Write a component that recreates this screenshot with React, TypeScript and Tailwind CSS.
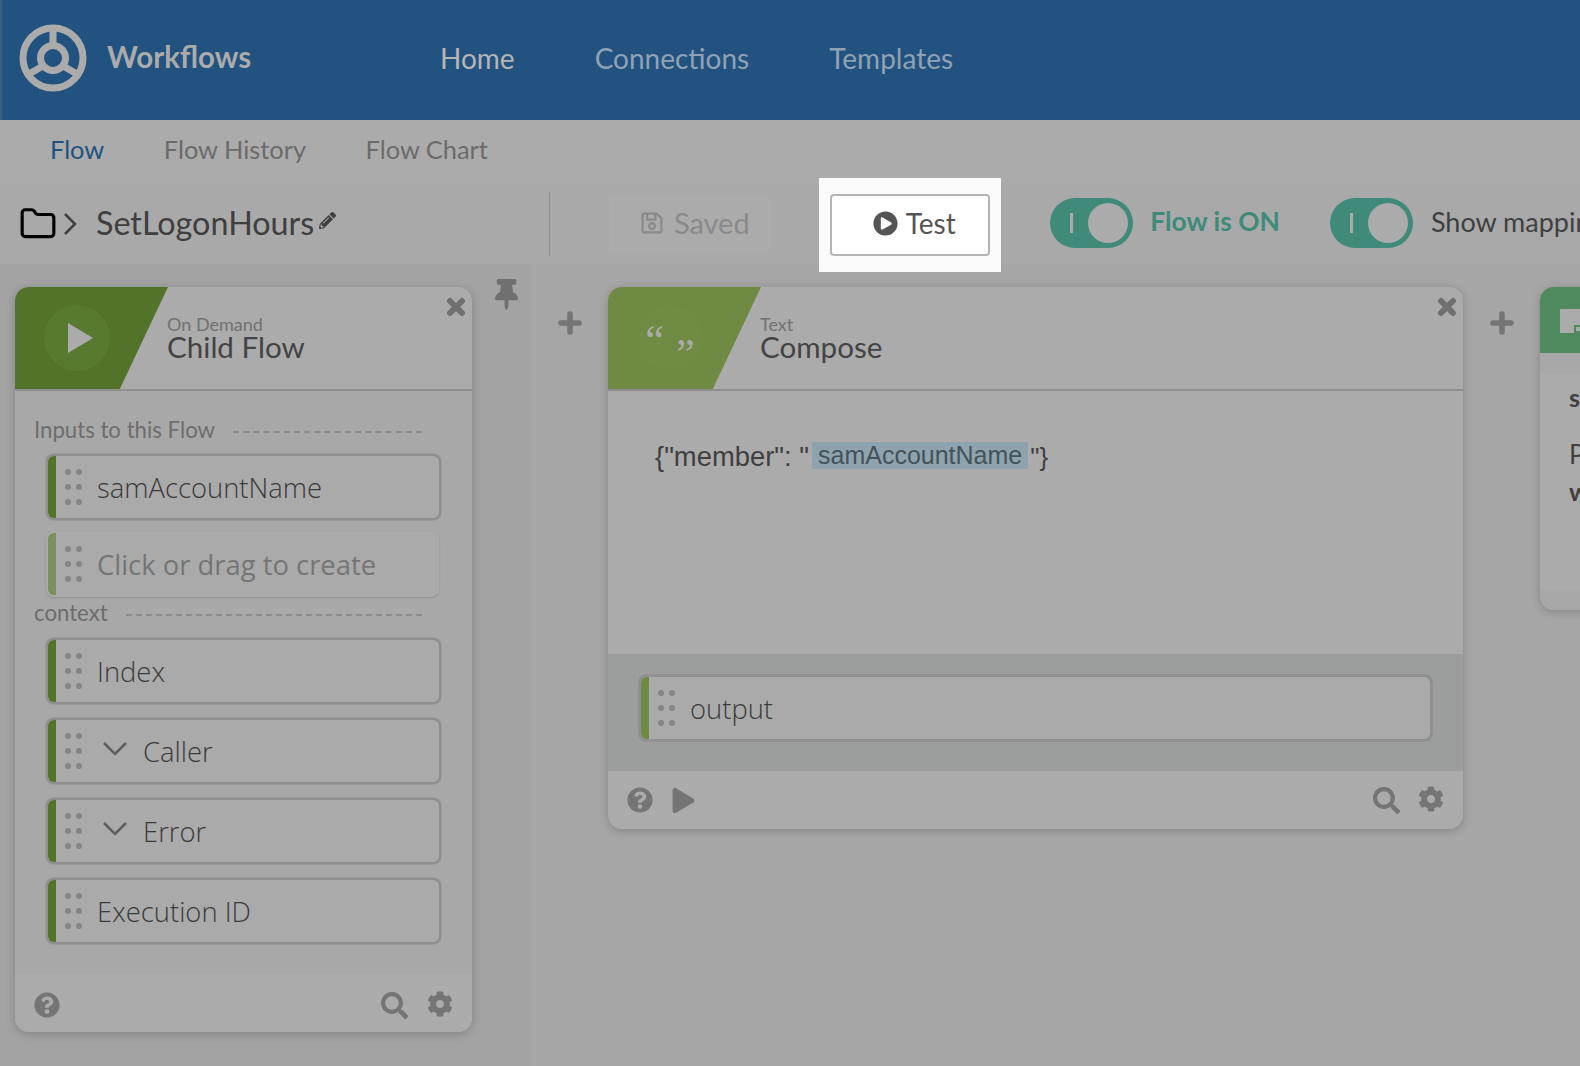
import { Folder } from 'lucide-react';
import {
    FaCog,
    FaPencilAlt,
    FaPlay,
    FaPlayCircle,
    FaQuestionCircle,
    FaRegSave,
    FaSearch,
    FaThumbtack,
} from 'react-icons/fa';

const heading = "font-['Lato','Open_Sans',sans-serif]";

function Logo() {
    return (
        <svg width="68" height="68" viewBox="0 0 68 68" fill="none" stroke="#ababab" className="mt-[-5px] shrink-0">
            <circle cx="34" cy="34" r="30" strokeWidth="7" />
            <circle cx="34" cy="34" r="12.5" strokeWidth="7" />
            <path d="M34 6v16M10 50l14-8M58 50l-14-8" strokeWidth="7" />
        </svg>
    );
}

function Toggle() {
    return (
        <div className="flex h-[50px] w-[83px] shrink-0 items-center justify-between rounded-full bg-[#3f8a78] pl-[20px] pr-[5px]">
            <div className="h-[20px] w-[3px] bg-[#ababab]" />
            <div className="h-[40px] w-[40px] rounded-full bg-[#ababab]" />
        </div>
    );
}

function Dots() {
    return (
        <div className="grid w-[17px] shrink-0 grid-cols-2 gap-x-[5px] gap-y-[9px]">
            {[0, 1, 2, 3, 4, 5].map((d) => (
                <div key={d} className="h-[6px] w-[6px] rounded-full bg-[#858585]" />
            ))}
        </div>
    );
}

function CloseIcon() {
    return (
        <svg width="20" height="20" viewBox="0 0 20 20" className="absolute right-[6px] top-[10px]">
            <path d="M4 4l12 12M16 4L4 16" stroke="#707070" strokeWidth="6" strokeLinecap="round" />
        </svg>
    );
}

function PlusIcon() {
    return (
        <svg width="24" height="24" viewBox="0 0 24 24">
            <path d="M12 3v18M3 12h18" stroke="#757575" strokeWidth="5.5" strokeLinecap="round" />
        </svg>
    );
}

function Row({
    label,
    bar = 'bg-[#53732b]',
    chevron = false,
    ghost = false,
}: {
    label: string;
    bar?: string;
    chevron?: boolean;
    ghost?: boolean;
}) {
    return (
        <div
            className={
                ghost
                    ? 'mr-[2px] flex h-[66px] items-stretch overflow-hidden rounded-[8px] border-2 border-transparent bg-[#aaaaaa] shadow-[0_1px_2px_rgba(0,0,0,0.15)]'
                    : 'flex h-[66px] items-stretch overflow-hidden rounded-[8px] border-2 border-[#8f8f8f] bg-[#aaaaaa] shadow-[0_0_2px_rgba(0,0,0,0.25)]'
            }
        >
            <div className={`w-[8px] shrink-0 ${bar}`} />
            <div className="flex flex-1 items-center pl-[9px]">
                <Dots />
                {chevron && (
                    <svg width="26" height="16" viewBox="0 0 26 16" fill="none" className="mb-[4px] ml-[20px]">
                        <path d="M2 2l11 11L24 2" stroke="#5f5f5f" strokeWidth="2.5" />
                    </svg>
                )}
                <span
                    className={`pt-[2px] font-['Open_Sans',sans-serif] text-[27.4px] leading-none ${
                        chevron ? 'ml-[15px]' : 'ml-[15px]'
                    } ${ghost ? 'font-normal text-[#757575]' : 'font-light text-[#3a3a3a]'}`}
                >
                    {label}
                </span>
            </div>
        </div>
    );
}

function CardHead({ small, title, green, icon }: { small: string; title: string; green: string; icon: React.ReactNode }) {
    return (
        <div className="relative flex h-[104px] shrink-0 border-b-2 border-[#8e8e8e]">
            <div className={`flex h-[102px] w-[153px] shrink-0 items-center pl-[29px] ${green} [clip-path:polygon(0_0,100%_0,68.5%_100%,0_100%)]`}>
                {icon}
            </div>
            <div className={`${heading} -ml-[1px] pt-[29px] text-[#444444]`}>
                <div className="whitespace-nowrap text-[18px] leading-[16px] text-[#727272]">{small}</div>
                <div className="whitespace-nowrap text-[29.6px] leading-[30px]">{title}</div>
            </div>
            <CloseIcon />
        </div>
    );
}

function Section({ label }: { label: string }) {
    return (
        <div className={`${heading} flex items-center gap-[18px] pr-[50px] text-[22.2px] leading-[26px] text-[#6d6d6d]`}>
            <span>{label}</span>
            <div className="mt-[3px] flex-1 border-t-2 border-dashed border-[#8c8c8c]" />
        </div>
    );
}

export default function App() {
    return (
        <div className="flex h-[1066px] w-[1580px] flex-col overflow-hidden bg-[#a6a6a6]">
            <header className="flex h-[120px] shrink-0 items-center border-l-2 border-[#3a5f82] bg-[#22527f] pl-[17px]">
                <Logo />
                <span className={`${heading} ml-[20px] mt-[-5px] w-[333px] text-[29.5px] font-bold text-[#ababab]`}>Workflows</span>
                <nav className={`${heading} mt-[-4px] flex gap-[80px] text-[28px]`}>
                    <span className="text-[#b5b5b5]">Home</span>
                    <span className="text-[#8fa2b5]">Connections</span>
                    <span className="text-[#8fa2b5]">Templates</span>
                </nav>
            </header>

            <nav className={`${heading} flex h-[64px] shrink-0 items-center gap-[59.5px] bg-[#ababab] pb-[6px] pl-[50px] text-[25.4px] text-[#6b6b6b]`}>
                <span className="text-[#22527f]">Flow</span>
                <span>Flow History</span>
                <span>Flow Chart</span>
            </nav>

            <div className="flex h-[80px] shrink-0 items-center bg-[#a9a9a9] pl-[19px]">
                <Folder size={38} strokeWidth={2} className="shrink-0 text-black" />
                <svg width="14" height="24" viewBox="0 0 14 24" fill="none" className="ml-[6px] shrink-0">
                    <path d="M2 2l10 10L2 22" stroke="#3f3f3f" strokeWidth="2.5" />
                </svg>
                <span className={`${heading} ml-[19px] mb-[2px] shrink-0 text-[32.3px] text-[#3f3f3f]`}>SetLogonHours</span>
                <FaPencilAlt size={17} className="mb-[8px] ml-[5px] shrink-0 text-[#3f3f3f]" />
                <div className="ml-[213px] h-[64px] w-[1px] shrink-0 bg-[#8f8f8f]" />
                <div className={`${heading} ml-[59px] flex h-[54px] w-[162px] shrink-0 items-center justify-center gap-[10px] bg-[#ababab] pb-[3px] pl-[9px] text-[29px] text-[#8a8a8a]`}>
                    <FaRegSave size={24} />
                    Saved
                </div>
                <div className="relative z-10 ml-[48px] mt-[2px] shrink-0 bg-[#fafafa] px-[11px] py-[16px]">
                    <button className={`${heading} flex h-[62px] w-[160px] items-center justify-center gap-[8px] rounded-[4px] border-2 border-[#b5b5b5] bg-white pb-[4px] pl-[8px] text-[28px] text-[#555555]`}>
                        <FaPlayCircle size={25} />
                        Test
                    </button>
                </div>
                <div className="mb-[3px] ml-[49px] shrink-0">
                    <Toggle />
                </div>
                <span className={`${heading} mb-[5px] ml-[17px] shrink-0 whitespace-nowrap text-[26.4px] font-bold text-[#3f8a78]`}>Flow is ON</span>
                <div className="mb-[3px] ml-[50px] shrink-0">
                    <Toggle />
                </div>
                <span className={`${heading} mb-[3px] ml-[18px] shrink-0 whitespace-nowrap text-[27px] text-[#3f3f3f]`}>Show mapping</span>
            </div>

            <main className="flex flex-1">
                <aside className="flex w-[532px] shrink-0 items-start bg-[#a3a3a3] pl-[15px] pt-[23px]">
                    <section className="flex h-[745px] w-[457px] shrink-0 flex-col overflow-hidden rounded-[14px] bg-[#ababab] shadow-[0_2px_10px_rgba(0,0,0,0.2)]">
                        <CardHead
                            small="On Demand"
                            title="Child Flow"
                            green="bg-[#53732b]"
                            icon={
                                <div className="flex h-[66px] w-[66px] items-center justify-center rounded-full bg-[#587a30]">
                                    <svg width="25" height="30" viewBox="0 0 25 30" className="ml-[7px]">
                                        <polygon points="0,0 25,15 0,30" fill="#ababab" />
                                    </svg>
                                </div>
                            }
                        />
                        <div className="flex flex-1 flex-col bg-[#a8a8a8] pl-[19px] pt-[26px]">
                            <Section label="Inputs to this Flow" />
                            <div className="mt-[11px] flex flex-col gap-[11px] pl-[12px] pr-[31px]">
                                <Row label="samAccountName" />
                                <Row label="Click or drag to create" bar="bg-[#7c8f5f]" ghost />
                            </div>
                            <div className="mt-[3px]">
                                <Section label="context" />
                            </div>
                            <div className="mt-[12px] flex flex-col gap-[14px] pl-[12px] pr-[31px]">
                                <Row label="Index" />
                                <Row label="Caller" chevron />
                                <Row label="Error" chevron />
                                <Row label="Execution ID" />
                            </div>
                        </div>
                        <div className="flex h-[58px] shrink-0 items-center bg-[#ababab] px-[19px] pt-[4px] text-[#757575]">
                            <FaQuestionCircle size={26} />
                            <FaSearch size={27} className="ml-auto" />
                            <FaCog size={26} className="mb-[3px] ml-[19px]" />
                        </div>
                    </section>
                    <FaThumbtack size={31} className="ml-[19px] mt-[-8px] shrink-0 text-[#707070]" />
                </aside>

                <div className="flex min-w-0 flex-1 items-start pt-[23px]">
                    <div className="flex h-[72px] w-[76px] shrink-0 items-center justify-center">
                        <PlusIcon />
                    </div>
                    <section className="flex h-[542px] w-[855px] shrink-0 flex-col overflow-hidden rounded-[14px] bg-[#ababab] shadow-[0_2px_10px_rgba(0,0,0,0.2)]">
                        <CardHead
                            small="Text"
                            title="Compose"
                            green="bg-[#6f8a42]"
                            icon={
                                <div className="flex h-[66px] w-[66px] items-start justify-center rounded-full bg-[#708c44] pt-[14px] font-['Liberation_Serif',serif] text-[42px] leading-none text-[#ababab]">
                                    <span>“</span>
                                    <span className="ml-[12px] mt-[14px]">”</span>
                                </div>
                            }
                        />
                        <div className="flex h-[263px] shrink-0 items-start pl-[47px] pt-[51px] font-['Liberation_Sans',sans-serif] leading-[30px] text-[#3f3f3f]">
                            <span className="whitespace-pre text-[27.4px]">{'{"member": "'}</span>
                            <span className="ml-[3px] bg-[#8fa3ae] px-[6px] text-[25px] leading-[27px] text-[#44525a]">samAccountName</span>
                            <span className="ml-[2px] whitespace-pre text-[26px]">{'"}'}</span>
                        </div>
                        <div className="h-[117px] shrink-0 bg-[#9b9e9c] px-[31px] pt-[21px]">
                            <Row label="output" bar="bg-[#6f8a42]" />
                        </div>
                        <div className="flex flex-1 items-center gap-[18px] px-[19px] text-[#757575]">
                            <FaQuestionCircle size={26} />
                            <FaPlay size={25} />
                            <FaSearch size={27} className="ml-auto" />
                            <FaCog size={26} className="mb-[3px]" />
                        </div>
                    </section>
                    <div className="flex h-[72px] w-[77px] shrink-0 items-center justify-center">
                        <PlusIcon />
                    </div>
                    <section className="flex h-[323px] w-[400px] shrink-0 flex-col overflow-hidden rounded-[14px] bg-[#ababab] shadow-[0_2px_10px_rgba(0,0,0,0.2)]">
                        <div className="flex h-[66px] shrink-0 items-start bg-[#4f8a5f] pl-[20px] pt-[22px]">
                            <div className="flex h-[24px] w-[40px] items-end justify-end rounded-[1px] bg-[#ababab] pr-[6px]">
                                <div className="h-[8px] w-[20px] border-2 border-[#4f8a5f]" />
                            </div>
                        </div>
                        <div className="h-[20px] shrink-0 bg-[#a8a8a8]" />
                        <div className={`${heading} flex-1 pl-[29px] text-[#3f3f3f]`}>
                            <div className="text-[25px] font-bold leading-[48px]">sam</div>
                            <div className="mt-[15px] text-[26px] leading-[37px]">Path</div>
                            <div className="text-[25px] font-bold leading-[37px]">with</div>
                        </div>
                        <div className="h-[20px] shrink-0 bg-[#a8a8a8]" />
                    </section>
                </div>
            </main>
        </div>
    );
}
